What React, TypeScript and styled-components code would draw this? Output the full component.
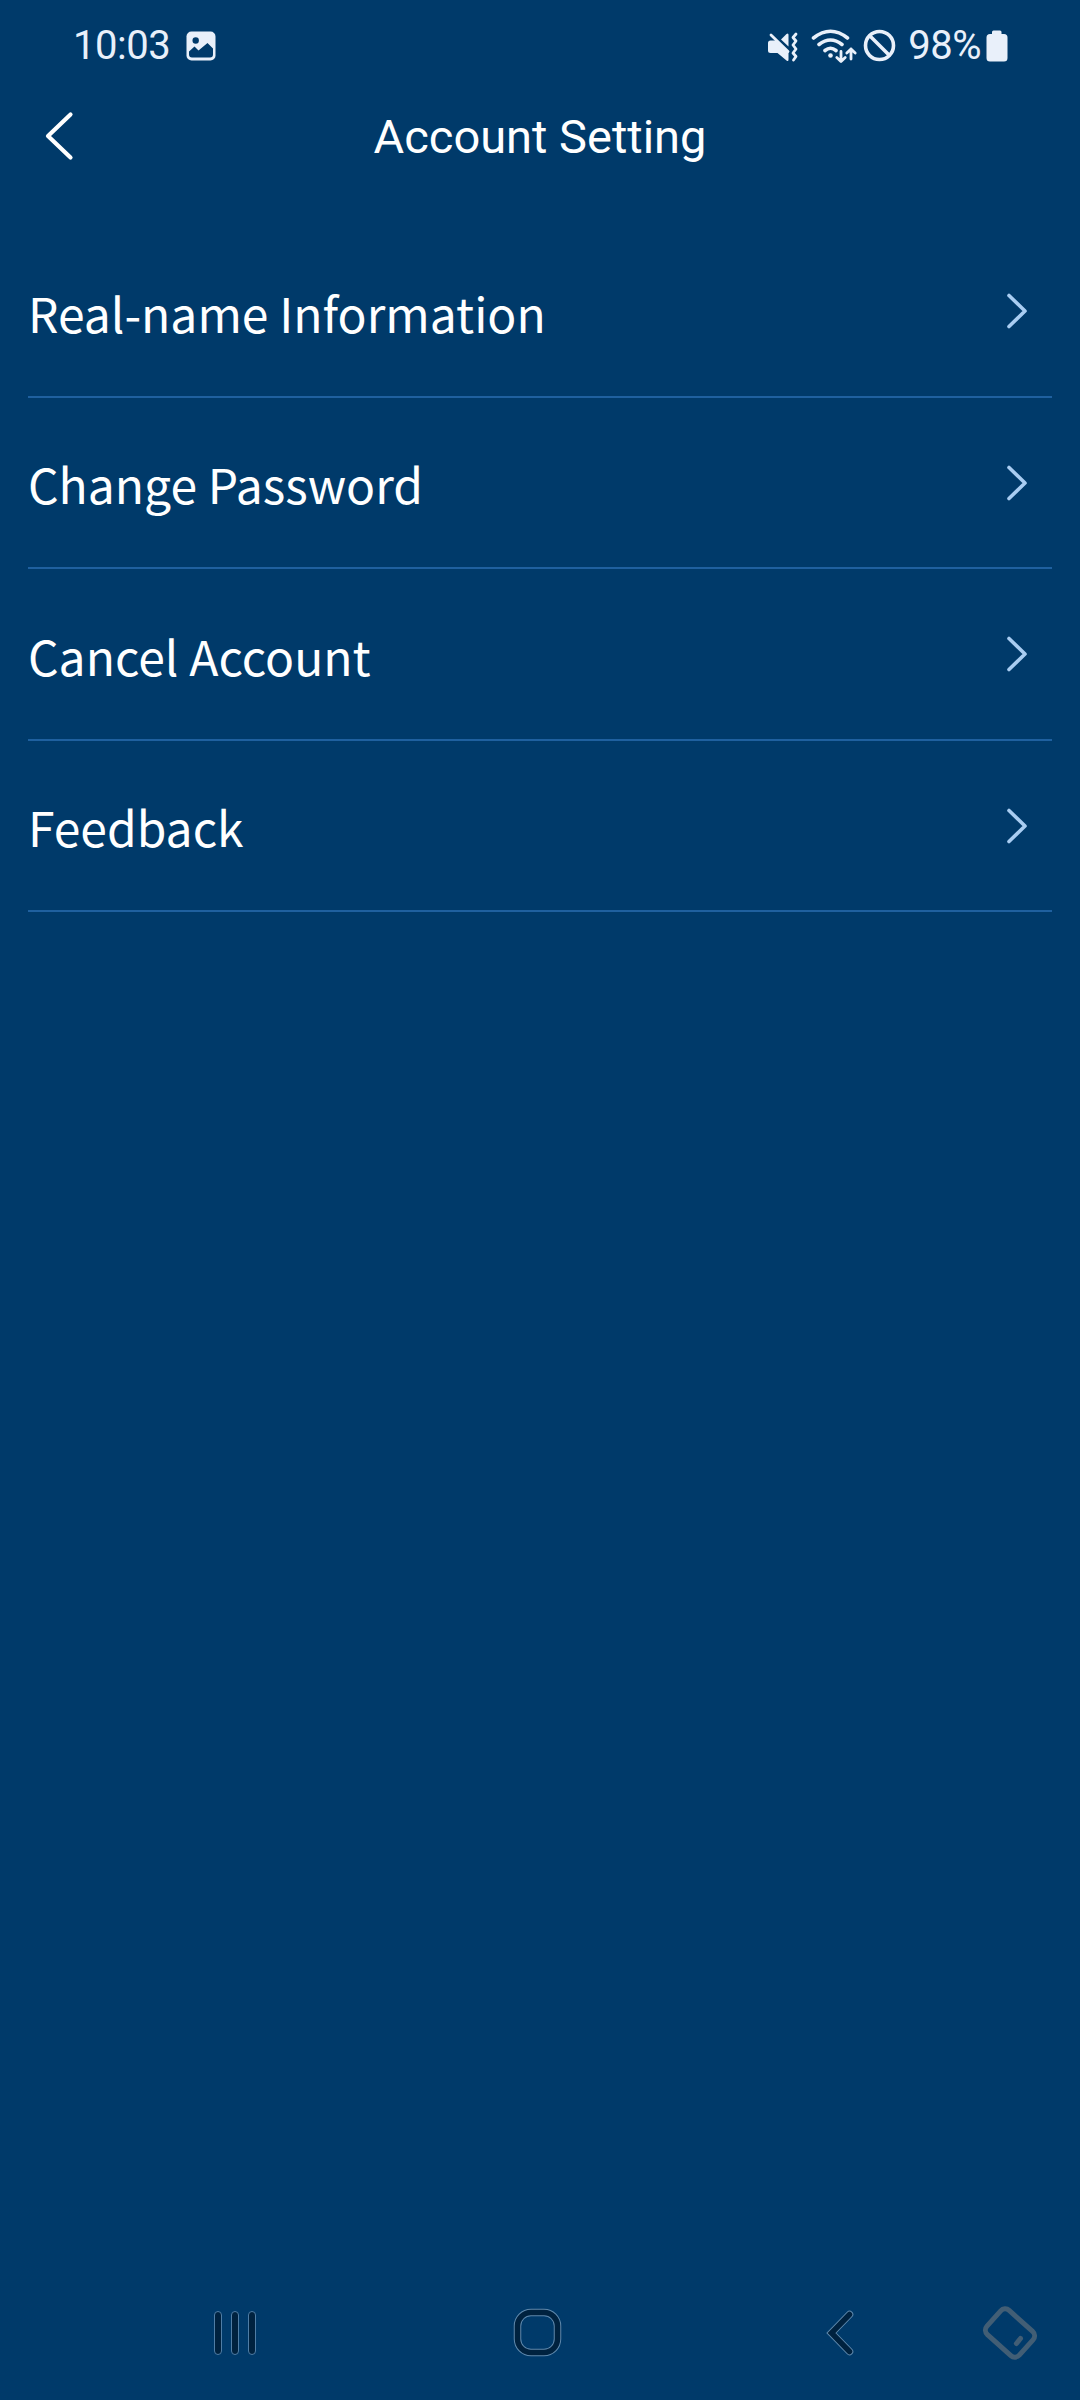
import React from 'react';
import styled, { createGlobalStyle } from 'styled-components';

const GlobalStyle = createGlobalStyle`
  * { box-sizing: border-box; }
  body { margin: 0; background: #003a6a; }
`;

const Screen = styled.div`
  display: flex;
  flex-direction: column;
  width: 1080px;
  height: 2400px;
  overflow: hidden;
  background: #003a6a;
  color: #fff;
  font-family: Roboto, sans-serif;
`;

const StatusBar = styled.header`
  display: flex;
  align-items: center;
  justify-content: space-between;
  height: 90px;
  padding: 1px 72px 0 73px;
  color: #e9f0fa;
  font-size: 40px;
  line-height: 48px;
`;

const StatusGroup = styled.div`
  display: flex;
  align-items: center;
`;

const Clock = styled.span`
  margin-right: 16px;
  letter-spacing: -0.5px;
`;

const Battery = styled.span`
  margin: 0 5px 0 8px;
  letter-spacing: -0.5px;
`;

const TitleBar = styled.div`
  display: grid;
  grid-template-columns: 120px 1fr 120px;
  align-items: center;
  height: 92px;
`;

const BackButton = styled.button`
  display: flex;
  padding: 0 0 0 42px;
  border: 0;
  background: none;
  color: #fff;
`;

const Title = styled.h1`
  margin: 0;
  padding-top: 2px;
  font-size: 47px;
  font-weight: 400;
  line-height: 60px;
  text-align: center;
`;

const List = styled.main`
  flex: 1;
  padding: 44px 28px 0;
`;

const Row = styled.div`
  display: flex;
  align-items: center;
  justify-content: space-between;
  height: 171.5px;
  padding: 2px 23px 0 0;
  border-bottom: 2px solid #1f609f;
`;

const RowLabel = styled.span`
  font-family: 'Noto Sans CJK SC', sans-serif;
  font-size: 48px;
  line-height: 76px;
`;

const RowArrow = styled.svg`
  margin-bottom: 1px;
`;

const NavBar = styled.nav`
  display: grid;
  grid-template-columns: 210px 44px 258.5px 50px 262px 30px 127.5px 56px;
  align-items: center;
  height: 135px;
`;

const NavIcon = styled.svg`
  grid-column: ${(p: { $col: number }) => p.$col};
  overflow: visible;
`;

const rows = ['Real-name Information', 'Change Password', 'Cancel Account', 'Feedback'];

export default function App() {
  return (
    <Screen>
      <GlobalStyle />
      <StatusBar>
        <StatusGroup>
          <Clock>10:03</Clock>
          <svg width="30" height="30" viewBox="0 0 30 30">
            <rect x="0.5" y="0.5" width="29" height="29" rx="5" fill="#e9f0fa" />
            <circle cx="9.7" cy="9.5" r="3.2" fill="#003a6a" />
            <path d="M3 20.5 8.5 15.5 12.5 19.5 21.5 12 27 17.5V23.5Q27 26.5 24 26.5H6Q3 26.5 3 23.5Z" fill="#003a6a" />
          </svg>
        </StatusGroup>
        <StatusGroup>
          <svg width="134" height="40" viewBox="766 25 134 40" fill="none" stroke="#e9f0fa" strokeLinecap="round" strokeLinejoin="round">
            <g stroke="none" fill="#e9f0fa">
              <path d="M770.5 39.500H776L788.500 51.500V58.500Q788.500 61 786.500 59.500L777.500 52H770.5Q768 52 768 49.500V42Q768 39.500 770.5 39.500Z" />
              <path d="M781 38.500 786.500 33Q788.500 31.500 788.500 34V45.500Z" />
            </g>
            <path d="M771 34 788 50.500" strokeWidth="2.8" />
            <path d="M796 33 793 36.500 796 40 793 44 796 48 793 52 796 55.500 793.500 59" strokeWidth="2.8" />
            <path d="M813.5 37Q830.5 23.500 847.5 37M819 43.500Q830.5 34.500 842 43.500M825 49.500Q830.5 45 836 49.500" strokeWidth="3.6" />
            <circle cx="830.5" cy="54.500" r="2.3" fill="#e9f0fa" stroke="none" />
            <path d="M841 50.500V60M836.8 56.500 841 60.500 845.2 56.500M851 58V48M846.8 52 851 48 855.2 52" strokeWidth="2.8" />
            <circle cx="879.5" cy="44.500" r="14" strokeWidth="3.6" />
            <path d="M870 35 889 54" strokeWidth="3.6" />
          </svg>
          <Battery>98%</Battery>
          <svg width="22" height="32" viewBox="0 0 22 32" fill="#e9f0fa">
            <path d="M6 4V2Q6 .5 7.5 .5H14Q15.500 .5 15.500 2V4H18Q21.500 4 21.500 7.500V28Q21.500 31.500 18 31.500H4Q.5 31.500 .5 28V7.500Q.5 4 4 4Z" />
          </svg>
        </StatusGroup>
      </StatusBar>

      <TitleBar>
        <BackButton aria-label="Back">
          <svg width="34" height="52" viewBox="0 0 34 52" fill="none" stroke="currentColor" strokeWidth="4.2" strokeLinecap="round" strokeLinejoin="round">
            <path d="M28.500 4.500 6 26 28.500 47.500" />
          </svg>
        </BackButton>
        <Title>Account Setting</Title>
      </TitleBar>

      <List>
        {rows.map((label) => (
          <Row key={label}>
            <RowLabel>{label}</RowLabel>
            <RowArrow width="24" height="38" viewBox="0 0 24 38" fill="none" stroke="#a9cdf2" strokeWidth="3.6" strokeLinecap="round" strokeLinejoin="round">
              <path d="M4 3.500 20 19 4 34.500" />
            </RowArrow>
          </Row>
        ))}
      </List>

      <NavBar>
        <NavIcon $col={2} width="44" height="46" viewBox="0 0 44 46" fill="#00223f" stroke="#4f7da5" strokeWidth="1">
          <rect x="4.500" y="1.500" width="7" height="43" rx="3.500" />
          <rect x="21.500" y="1.500" width="7" height="43" rx="3.500" />
          <rect x="38.500" y="1.500" width="7" height="43" rx="3.500" />
        </NavIcon>
        <NavIcon $col={4} width="50" height="50" viewBox="0 0 50 50" fill="none">
          <rect x="4.500" y="4.500" width="40" height="40" rx="13.500" stroke="#5f89ad" strokeWidth="7.500" />
          <rect x="4.500" y="4.500" width="40" height="40" rx="13.500" stroke="#00223f" strokeWidth="5.500" />
        </NavIcon>
        <NavIcon $col={6} width="30" height="46" viewBox="0 0 30 46" fill="none" strokeLinecap="round" strokeLinejoin="miter">
          <path d="M24.500 4.500 6.500 23 24.500 41.500" stroke="#5f89ad" strokeWidth="7.500" />
          <path d="M24.500 4.500 6.500 23 24.500 41.500" stroke="#00223f" strokeWidth="5.500" />
        </NavIcon>
        <NavIcon $col={8} width="56" height="56" viewBox="0 0 56 56" fill="none" stroke="#425e75" strokeWidth="5" strokeLinecap="round">
          <rect x="6.250" y="11.750" width="43.500" height="32.500" rx="6" transform="rotate(42 28 28)" />
          <path d="M34.500 38.500 38.500 33.500" />
        </NavIcon>
      </NavBar>
    </Screen>
  );
}
